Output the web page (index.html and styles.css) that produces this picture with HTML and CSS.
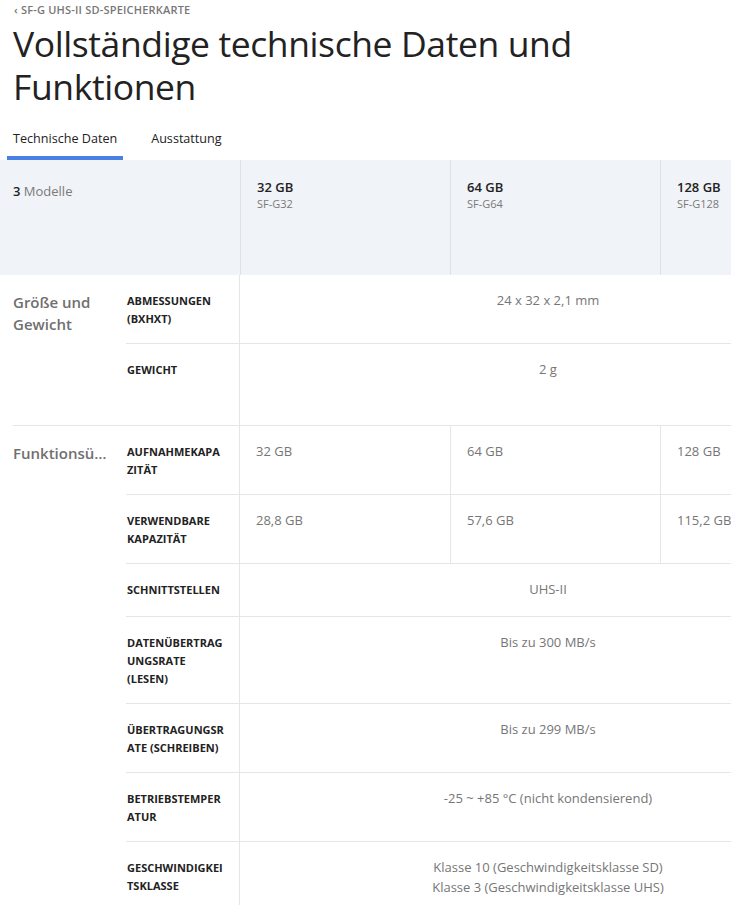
FILE: index.html
```html
<!DOCTYPE html>
<html lang="de">
<head>
<meta charset="utf-8">
<title>Vollständige technische Daten und Funktionen</title>
<link rel="stylesheet" href="styles.css">
</head>
<body>
<div class="page">
  <a class="crumb" href="#"><span class="chev">‹</span> SF-G UHS-II SD-SPEICHERKARTE</a>
  <h1 class="title">Vollständige technische Daten und Funktionen</h1>
  <nav class="tabs">
    <a class="tab active" href="#">Technische Daten</a>
    <a class="tab" href="#">Ausstattung</a>
  </nav>

  <div class="specs">
    <div class="head">
      <div class="corner"><b>3</b> Modelle</div>
      <div class="model"><div class="cap">32 GB</div><div class="code">SF-G32</div></div>
      <div class="model"><div class="cap">64 GB</div><div class="code">SF-G64</div></div>
      <div class="model"><div class="cap">128 GB</div><div class="code">SF-G128</div></div>
    </div>

    <div class="group">
      <div class="gname">Größe und Gewicht</div>
      <div class="rows">
        <div class="row">
          <div class="label">Abmessungen (BxHxT)</div>
          <div class="vals"><div class="cell merged">24 x 32 x 2,1 mm</div></div>
        </div>
        <div class="row">
          <div class="label">Gewicht</div>
          <div class="vals"><div class="cell merged">2 g</div></div>
        </div>
      </div>
    </div>

    <div class="group">
      <div class="gname trunc">Funktionsübersicht</div>
      <div class="rows">
        <div class="row">
          <div class="label">Aufnahmekapazität</div>
          <div class="vals"><div class="cell">32 GB</div><div class="cell">64 GB</div><div class="cell">128 GB</div></div>
        </div>
        <div class="row">
          <div class="label">Verwendbare Kapazität</div>
          <div class="vals"><div class="cell">28,8 GB</div><div class="cell">57,6 GB</div><div class="cell">115,2 GB</div></div>
        </div>
        <div class="row">
          <div class="label">Schnittstellen</div>
          <div class="vals"><div class="cell merged">UHS-II</div></div>
        </div>
        <div class="row">
          <div class="label">Datenübertragungsrate (Lesen)</div>
          <div class="vals"><div class="cell merged">Bis zu 300 MB/s</div></div>
        </div>
        <div class="row">
          <div class="label">Übertragungsrate (Schreiben)</div>
          <div class="vals"><div class="cell merged">Bis zu 299 MB/s</div></div>
        </div>
        <div class="row">
          <div class="label">Betriebstemperatur</div>
          <div class="vals"><div class="cell merged">-25 ~ +85 °C (nicht kondensierend)</div></div>
        </div>
        <div class="row">
          <div class="label">Geschwindigkeitsklasse</div>
          <div class="vals"><div class="cell merged">Klasse 10 (Geschwindigkeitsklasse SD)<br>Klasse 3 (Geschwindigkeitsklasse UHS)</div></div>
        </div>
      </div>
    </div>
  </div>
</div>
</body>
</html>
```

FILE: styles.css
```css
html, body {
  margin: 0;
  padding: 0;
  overflow: hidden;
  background: #fff;
}
body {
  font-family: "Open Sans", "Noto Sans", sans-serif;
  color: #222;
}
.page {
  width: 731px;
  overflow: hidden;
}
.crumb {
  display: block;
  margin: 3px 0 0 14px;
  font-size: 11px;
  font-weight: 600;
  line-height: 14px;
  letter-spacing: 0.2px;
  color: #777;
  text-decoration: none;
}
.chev { font-size: 11px; }
.title {
  margin: 5px 0 0 13px;
  width: 640px;
  font-size: 35.5px;
  font-weight: 400;
  line-height: 43px;
  color: #222;
  letter-spacing: -0.4px;
}
.tabs {
  display: flex;
  gap: 22px;
  margin: 22px 0 0 7px;
}
.tab {
  display: block;
  padding: 0 6px 8px;
  font-size: 12.6px;
  line-height: 18px;
  color: #222;
  text-decoration: none;
  border-bottom: 4px solid transparent;
}
.tab.active { border-bottom-color: #4a7fe3; }

.specs { width: 870px; }

.head {
  display: flex;
  background: #f0f3f8;
  height: 115px;
}
.corner {
  width: 240px;
  box-sizing: border-box;
  padding: 22px 0 0 13px;
  font-size: 13px;
  line-height: 18px;
  color: #7a7a7a;
}
.corner b { color: #222; font-weight: 600; }
.model {
  width: 210px;
  box-sizing: border-box;
  border-left: 1px solid #dde1e8;
  padding: 18px 0 0 16px;
}
.cap {
  font-size: 13px;
  font-weight: 600;
  line-height: 18px;
  color: #222;
}
.code {
  font-size: 11px;
  line-height: 15px;
  color: #7a7a7a;
}

.group {
  display: flex;
  margin-left: 13px;
  border-bottom: 1px solid #e4e6ea;
}
.gname {
  width: 98px;
  margin-right: 16px;
  padding-top: 16px;
  font-size: 15px;
  font-weight: 600;
  line-height: 22px;
  color: #6f6f6f;
}
.gname.trunc {
  white-space: nowrap;
  overflow: hidden;
  text-overflow: ellipsis;
}
.rows { flex: 1; }
.row {
  display: flex;
  border-bottom: 1px solid #e4e6ea;
}
.row:last-child { border-bottom: 0; }
.label {
  width: 113px;
  box-sizing: border-box;
  padding: 17px 14px 15px 1px;
  font-size: 11px;
  font-weight: 700;
  line-height: 18px;
  text-transform: uppercase;
  overflow-wrap: anywhere;
  color: #222;
}
.vals {
  display: flex;
  border-left: 1px solid #e4e6ea;
}
.row:last-child .label,
.row:last-child .vals { padding-bottom: 29px; }
.cell {
  width: 210px;
  box-sizing: border-box;
  padding: 15px 16px 17px;
  font-size: 13px;
  line-height: 20px;
  color: #767676;
}
.cell + .cell { border-left: 1px solid #e4e6ea; }
.cell.merged {
  width: 630px;
  padding-right: 30px;
  text-align: center;
}
```
